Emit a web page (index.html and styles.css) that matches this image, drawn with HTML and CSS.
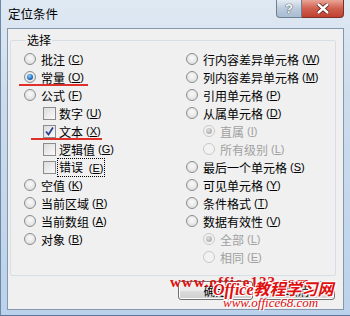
FILE: index.html
```html
<!DOCTYPE html>
<html lang="zh-CN">
<head>
    <meta charset="UTF-8">
    <title>定位条件</title>
    <link rel="stylesheet" href="styles.css">
</head>
<body>

<div class="window">
    <div class="titlebar">
        <span class="title">定位条件</span>
        <div class="caption-btns">
            <span class="cap help">?</span>
            <span class="cap close">
                <svg width="14" height="11" viewBox="0 0 14 11"><path d="M2 1 L12 10 M12 1 L2 10" stroke="#5a1a12" stroke-width="4"/><path d="M2 1 L12 10 M12 1 L2 10" stroke="#fff" stroke-width="2.4"/></svg>
            </span>
        </div>
    </div>

    <div class="client">
        <div class="group">
            <span class="group-label">选择</span>
            <div class="cols">
                <div class="col">
                    <div class="row"><span class="radio"></span>批注 <span class="key">(<u>C</u>)</span></div>
                    <div class="row"><span class="radio on"></span>常量 <span class="key">(<u>O</u>)</span></div>
                    <div class="row"><span class="radio"></span>公式 <span class="key">(<u>F</u>)</span></div>
                    <div class="row sub"><span class="check"></span>数字 <span class="key">(<u>U</u>)</span></div>
                    <div class="row sub"><span class="check">
                        <svg width="11" height="11" viewBox="0 0 11 11"><path d="M2 5.5 L4.5 8.5 L9 1.5" fill="none" stroke="#2b3f8c" stroke-width="1.8"/></svg>
                    </span>文本 <span class="key">(<u>X</u>)</span></div>
                    <div class="row sub"><span class="check"></span>逻辑值 <span class="key">(<u>G</u>)</span></div>
                    <div class="row sub"><span class="check"></span><span class="focus">错误 <span class="key">(<u>E</u>)</span></span></div>
                    <div class="row"><span class="radio"></span>空值 <span class="key">(<u>K</u>)</span></div>
                    <div class="row"><span class="radio"></span>当前区域 <span class="key">(<u>R</u>)</span></div>
                    <div class="row"><span class="radio"></span>当前数组 <span class="key">(<u>A</u>)</span></div>
                    <div class="row"><span class="radio"></span>对象 <span class="key">(<u>B</u>)</span></div>
                </div>
                <div class="col">
                    <div class="row"><span class="radio"></span>行内容差异单元格 <span class="key">(<u>W</u>)</span></div>
                    <div class="row"><span class="radio"></span>列内容差异单元格 <span class="key">(<u>M</u>)</span></div>
                    <div class="row"><span class="radio"></span>引用单元格 <span class="key">(<u>P</u>)</span></div>
                    <div class="row"><span class="radio"></span>从属单元格 <span class="key">(<u>D</u>)</span></div>
                    <div class="row sub2 off"><span class="radio on"></span>直属 <span class="key">(<u>I</u>)</span></div>
                    <div class="row sub2 off"><span class="radio"></span>所有级别 <span class="key">(<u>L</u>)</span></div>
                    <div class="row"><span class="radio"></span>最后一个单元格 <span class="key">(<u>S</u>)</span></div>
                    <div class="row"><span class="radio"></span>可见单元格 <span class="key">(<u>Y</u>)</span></div>
                    <div class="row"><span class="radio"></span>条件格式 <span class="key">(<u>T</u>)</span></div>
                    <div class="row"><span class="radio"></span>数据有效性 <span class="key">(<u>V</u>)</span></div>
                    <div class="row sub2 off"><span class="radio on"></span>全部 <span class="key">(<u>L</u>)</span></div>
                    <div class="row sub2 off"><span class="radio"></span>相同 <span class="key">(<u>E</u>)</span></div>
                </div>
            </div>
        </div>

        <div class="buttons">
            <button class="btn">确定</button>
            <button class="btn">取消</button>
        </div>
    </div>

    <!-- red marks drawn over the screenshot -->
    <div class="mark mark-1"></div>
    <div class="mark mark-2"></div>

    <div class="watermark">
        <div class="wm-top">www.office123.com</div>
        <div class="wm-big">Office教程学习网</div>
        <div class="wm-url">www.office68.com</div>
    </div>
</div>

</body>
</html>
```

FILE: styles.css
```css
body {
    margin: 0;
    font-family: "Noto Sans CJK SC", "Noto Sans", sans-serif;
    font-size: 12px;
    color: #000;
}
.window {
    position: relative;
    width: 350px;
    height: 316px;
    box-sizing: border-box;
    background: linear-gradient(#dfe9f3, #cddcec 30%, #bcd2ea);
    border-left: 1px solid #6c88a8;
    border-bottom: 1px solid #5a7595;
    padding: 0 6px 4px 6px;
    overflow: hidden;
}
.titlebar {
    height: 28px;
    display: flex;
    align-items: flex-start;
    justify-content: space-between;
}
.title {
    margin: 6px 0 0 1px;
    font-size: 12.5px;
    line-height: 16px;
    color: #000;
}
.caption-btns {
    display: flex;
}
.cap {
    height: 18px;
    box-sizing: border-box;
    display: flex;
    align-items: center;
    justify-content: center;
    border: 1px solid #6d7f93;
    border-top: none;
}
.help {
    width: 26px;
    border-radius: 0 0 0 4px;
    background: linear-gradient(#e4ebf3, #bccbdc 50%, #a9bcd2);
    color: #fff;
    font: bold 13px "Liberation Sans", sans-serif;
    text-shadow: 0 0 1px #2a3a50, 0 0 1px #2a3a50;
}
.close {
    width: 42px;
    border-color: #7b2f26;
    border-left: none;
    border-radius: 0 0 4px 0;
    background: linear-gradient(#e9a597, #d0604f 50%, #c0402f);
}
.client {
    height: 282px;
    box-sizing: border-box;
    border: 1px solid #8397ad;
    background: #f0f0f0;
    padding: 11px 7px 0 2px;
}
.group {
    border: 1px solid #d5dfe5;
    border-radius: 2px;
    height: 234px;
    padding: 0 0 0 13px;
}
.group-label {
    display: block;
    width: max-content;
    margin: -8px 0 0 2px;
    padding: 0 1px;
    background: #f0f0f0;
    line-height: 14px;
    height: 14px;
}
.cols {
    display: grid;
    grid-template-columns: 162px 1fr;
    margin-top: 3px;
}
.row {
    height: 18px;
    display: flex;
    align-items: center;
    white-space: nowrap;
}
.row.sub {
    padding-left: 19px;
}
.row.sub2 {
    padding-left: 17px;
}
.off {
    color: #a0a0a0;
}
.key {
    font-family: "Liberation Sans", sans-serif;
    font-size: 11px;
    margin-left: 3px;
}
.radio {
    width: 12px;
    height: 12px;
    box-sizing: border-box;
    border-radius: 50%;
    border: 1px solid #8a8c8e;
    background: radial-gradient(circle at 50% 40%, #fafafa, #d8d8d8);
    margin-right: 5px;
    display: flex;
    align-items: center;
    justify-content: center;
}
.radio.on::after {
    content: "";
    width: 6px;
    height: 6px;
    border-radius: 50%;
    background: radial-gradient(circle at 40% 35%, #8ed0f8, #1e6cc0 60%, #0a3a80);
}
.off .radio {
    border-color: #c8c8c8;
    background: #f2f2f2;
}
.off .radio.on::after {
    background: radial-gradient(circle at 40% 35%, #e0e0e0, #9a9a9a);
}
.check {
    width: 13px;
    height: 13px;
    box-sizing: border-box;
    border: 1px solid #8a8c8e;
    background: linear-gradient(135deg, #dcdcdc, #fafafa);
    margin-right: 3px;
    display: flex;
    align-items: center;
    justify-content: center;
}
.focus {
    outline: 1px dotted #000;
    outline-offset: 1px;
    line-height: 14px;
}
.buttons {
    display: flex;
    justify-content: flex-end;
    gap: 7px;
    margin-top: 5px;
    padding-right: 1px;
}
.btn {
    width: 75px;
    height: 19px;
    padding: 0;
    font: 12px "Noto Sans CJK SC", sans-serif;
    border: 1px solid #707070;
    border-radius: 3px;
    background: linear-gradient(#f2f2f2, #ebebeb 50%, #dddddd 51%, #cfcfcf);
    box-shadow: inset 0 0 0 1px #fcfcfc;
}
.mark {
    position: absolute;
    height: 2px;
    background: #e0302a;
}
.mark-1 {
    left: 18px;
    top: 84px;
    width: 69px;
}
.mark-2 {
    left: 30px;
    top: 138px;
    width: 71px;
}
.watermark {
    position: absolute;
    left: 169px;
    top: 275px;
    color: #e01010;
    font-family: "Liberation Serif", "Noto Sans CJK SC", serif;
    font-style: italic;
    white-space: nowrap;
}
.wm-top {
    font-size: 15px;
    font-weight: bold;
    font-style: normal;
    letter-spacing: 1px;
    line-height: 14px;
}
.wm-big {
    margin: -8px 0 0 43px;
    font-size: 16px;
    font-weight: bold;
    line-height: 17px;
    text-shadow: 1px 1px 0 #fff, -1px -1px 0 #fff, 1px -1px 0 #fff, -1px 1px 0 #fff;
}
.wm-url {
    margin: -1px 0 0 53px;
    font-size: 13px;
    line-height: 12px;
    text-shadow: 1px 1px 0 #fff, -1px -1px 0 #fff;
}
```
